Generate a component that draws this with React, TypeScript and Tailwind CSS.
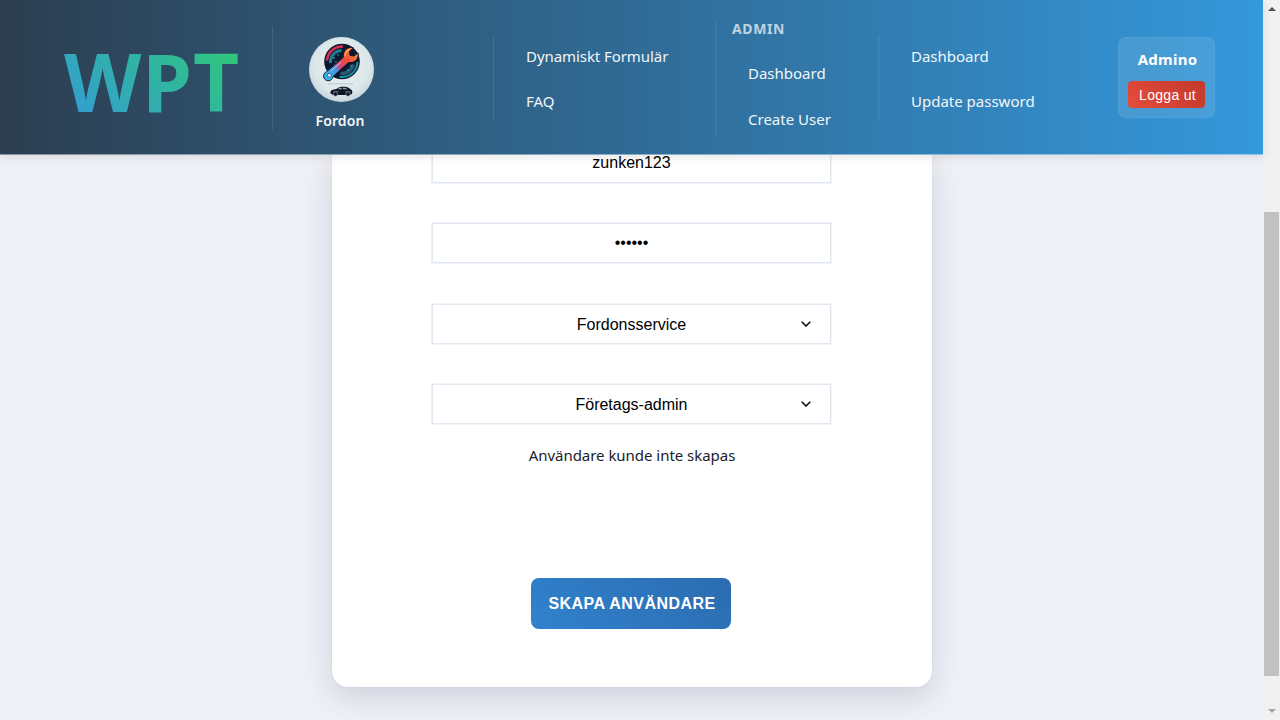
import type { ReactNode } from 'react';

function Emblem() {
  return (
    <svg viewBox="0 0 65 65" className="block h-[65px] w-[65px] shrink-0">
      <defs>
        <radialGradient id="disc" cx="0.5" cy="0.45" r="0.6">
          <stop offset="0" stopColor="#e9f1f3" />
          <stop offset="0.7" stopColor="#dce7ea" />
          <stop offset="1" stopColor="#bfd0d8" />
        </radialGradient>
        <linearGradient id="wrench" gradientUnits="userSpaceOnUse" x1="19" y1="40" x2="47" y2="14">
          <stop offset="0" stopColor="#35b3ee" />
          <stop offset="0.28" stopColor="#4a8fd8" />
          <stop offset="0.42" stopColor="#d8406f" />
          <stop offset="0.65" stopColor="#f04a3a" />
          <stop offset="1" stopColor="#f58a3c" />
        </linearGradient>
      </defs>
      <circle cx="32.5" cy="32.5" r="32.5" fill="url(#disc)" />
      <circle cx="33" cy="24.5" r="17.800" fill="#0b1a30" />
      <path d="M18 23.500a15.200 15.200 0 0 1 16-14" fill="none" stroke="#d92f50" strokeWidth="2.600" />
      <path d="M21.500 26a11.500 11.500 0 0 1 11-12.500" fill="none" stroke="#1d7f90" strokeWidth="3" />
      <path d="M48.500 25a15.500 15.500 0 0 1-18 14.800" fill="none" stroke="#1c8f9e" strokeWidth="2" />
      <path d="M44.500 27.500a12 12 0 0 1-13 9" fill="none" stroke="#255b74" strokeWidth="3.500" />
      <g fill="#4ac4cf">
        <circle cx="25" cy="21" r="0.8" />
        <circle cx="29" cy="18" r="0.7" />
        <circle cx="27" cy="25" r="0.7" />
        <circle cx="39" cy="33" r="0.8" />
        <circle cx="42" cy="29" r="0.7" />
      </g>
      <path
        d="M17.300 34.800L34.300 20.300C33.500 15.500 36.500 10.800 42 10.300L44.500 11L40.500 14.300L41 18.300L44.800 19L49 15.800C50.500 21.500 46 26.300 39.500 25.600L24 39.500A4.700 4.700 0 1 1 17.300 34.800Z"
        fill="url(#wrench)"
        stroke="#07152a"
        strokeWidth="1"
        strokeLinejoin="round"
      />
      <path d="M36.300 19.500C36 15.500 38.500 13 41 12.300" fill="none" stroke="#fbb04a" strokeWidth="1.300" />
      <path d="M22 34L32 25.500" stroke="#8fd8ff" strokeWidth="1" />
      <circle cx="20.300" cy="38.300" r="1.900" fill="#e6f2f6" stroke="#12528c" strokeWidth="0.800" />
      <path d="M19 46.800H44" stroke="#aebdc4" strokeWidth="0.800" />
      <path
        d="M21.600 56.500C21 54.500 22 53 25 52.600L27.500 52C29.500 50.300 31 49.800 34 49.800C37.500 49.800 39.500 50.400 41.500 52.300C43.300 53 43.700 55 43 57L40.500 58H24Z"
        fill="#0b1420"
      />
      <path d="M28.500 52.200C30 51 31 50.800 32.800 50.700V52.300ZM34 50.700C36.500 50.700 37.800 51.200 39 52.300H34Z" fill="#8fa3ae" />
      <path d="M24 54.500H30M36 54.500H41.500" stroke="#71858f" strokeWidth="0.500" />
      <circle cx="26.500" cy="57" r="2.200" fill="#0b1420" stroke="#a9bac2" strokeWidth="0.600" />
      <circle cx="39" cy="57" r="2.200" fill="#0b1420" stroke="#a9bac2" strokeWidth="0.600" />
    </svg>
  );
}

function Field({ children, select }: { children: ReactNode; select?: boolean }) {
  return (
    <div
      className={
        "relative flex h-10 w-[399px] shrink-0 items-center justify-center border border-[#e2e8f0] bg-white font-['Liberation_Sans',Arial,sans-serif] text-base leading-[18px] text-black shadow-[0_0_0_1px_#f0f4f8] " +
        (select ? 'pt-px' : '')
      }
    >
      <span>{children}</span>
      {select && (
        <svg viewBox="0 0 10 6" className="absolute right-[19px] top-4 h-[6px] w-[10px]">
          <path d="M0.700 0.700L5 5L9.300 0.700" fill="none" stroke="#111" strokeWidth="1.600" />
        </svg>
      )}
    </div>
  );
}

function NavLink({ children }: { children: ReactNode }) {
  return (
    <a className="flex h-[45px] items-center whitespace-nowrap text-[15px] leading-6 text-[#f2f6f8]">{children}</a>
  );
}

export default function App() {
  return (
    <div className="flex h-[720px] w-[1280px] overflow-hidden bg-[#f0f1f6] font-['Noto_Sans',sans-serif]">
      <div className="flex w-[1263px] flex-col">
        <header className="relative z-10 flex h-[155px] shrink-0 items-start border-b border-white/45 bg-linear-to-r/srgb from-[#2c3e50] to-[#3498db] shadow-[0_2px_10px_rgba(0,0,0,0.1)]">
          <div className="mt-[26px] flex h-[104px] w-[273px] items-center border-r border-white/10 pl-16 pt-[5px]">
            <span className="bg-linear-[45deg,#3498db,#2ecc71] bg-clip-text text-[80px] font-bold leading-[104px] tracking-[1px] text-transparent">
              WPT
            </span>
          </div>
          <div className="mt-[36px] flex h-[84px] w-[221px] flex-col border-r border-white/10 pl-9 pt-px">
            <Emblem />
            <div className="flex w-[65px] shrink-0 justify-center pr-[3px] pt-[7px] text-sm font-semibold leading-6 tracking-[0.1px] text-[#f2f6f8]">
              Fordon
            </div>
          </div>
          <nav className="mt-[33px] flex w-[221px] flex-col pl-8 tracking-[-0.07px]">
            <NavLink>Dynamiskt Formulär</NavLink>
            <NavLink>FAQ</NavLink>
          </nav>
          <nav className="mt-[18px] flex h-[119px] w-[163px] flex-col border-l-2 border-white/5 pl-[15px]">
            <span className="text-sm font-bold leading-[22px] tracking-[0.6px] text-white/70">ADMIN</span>
            <div className="flex flex-col gap-px pl-4 pt-[10px]">
              <NavLink>Dashboard</NavLink>
              <NavLink>Create User</NavLink>
            </div>
          </nav>
          <nav className="mt-[36px] flex h-[83px] w-[240px] flex-col border-l-2 border-white/5 pl-[31px]">
            <div className="-mt-[3px]">
              <NavLink>Dashboard</NavLink>
              <NavLink>Update password</NavLink>
            </div>
          </nav>
          <div className="mt-[37px] flex h-[81px] w-[97px] flex-col items-center rounded-lg border border-white/5 bg-white/10 pt-[9px]">
            <span className="pl-[2px] text-[15px] font-bold leading-6 tracking-[0.25px] text-white">Admino</span>
            <button className="mt-[10px] flex h-[27px] w-[77px] items-center justify-center rounded bg-linear-[45deg,#e74c3c,#c0392b] pl-[2px] font-['Liberation_Sans',Arial,sans-serif] text-sm leading-4 tracking-[0.3px] text-white">
              Logga ut
            </button>
          </div>
        </header>

        <main className="flex h-[565px] justify-center">
          <form className="flex h-[532px] w-[600px] flex-col items-center rounded-b-2xl bg-white shadow-[0_10px_30px_rgba(45,55,100,0.18),0_0_0_1px_rgba(226,232,240,0.5)]">
            <div className="-mt-3 flex flex-col items-center">
              <Field>zunken123</Field>
              <div className="h-10" />
              <Field>••••••</Field>
              <div className="h-[41px]" />
              <Field select>Fordonsservice</Field>
              <div className="h-10" />
              <Field select>Företags-admin</Field>
            </div>
            <p className="mt-[19px] pl-px text-[15px] leading-6 tracking-[-0.03px] text-[#1a202c]">
              Användare kunde inte skapas
            </p>
            <button className="mr-px mt-[111px] flex h-[51px] w-[200px] items-center justify-center rounded-lg bg-linear-[45deg,#3182ce,#2b6cb0] pl-[2px] font-['Liberation_Sans',Arial,sans-serif] text-base font-bold leading-[18px] tracking-[0.45px] text-white">
              SKAPA ANVÄNDARE
            </button>
          </form>
        </main>
      </div>

      <div className="flex w-[17px] flex-col items-center bg-[#f1f1f1]">
        <svg viewBox="0 0 8 4" className="mt-[7px] h-1 w-2 shrink-0"><path d="M0 4L4 0L8 4Z" fill="#505050" /></svg>
        <div className="mt-[201px] h-[464px] w-[15px] shrink-0 bg-[#c1c1c1]" />
        <svg viewBox="0 0 8 4" className="mt-[33px] h-1 w-2 shrink-0"><path d="M0 0L4 4L8 0Z" fill="#a3a3a3" /></svg>
      </div>
    </div>
  );
}
